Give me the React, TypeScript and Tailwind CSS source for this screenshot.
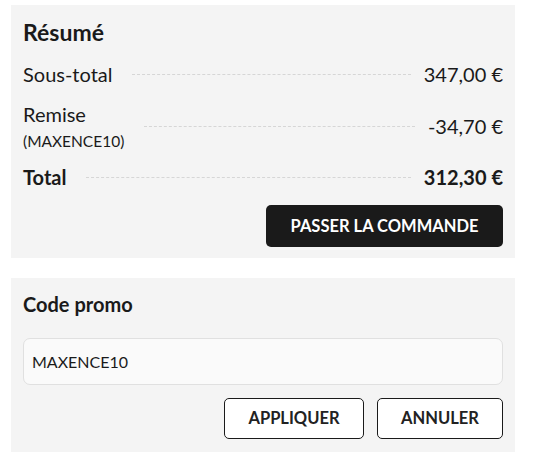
import React from "react";

const font = { fontFamily: "Lato, 'Noto Sans', sans-serif" };

function Row({ label, sub, value, bold }: { label: string; sub?: string; value: string; bold?: boolean }) {
  return (
    <div className="flex items-center">
      <div className="flex flex-col">
        <span className={`text-[20px] leading-[28px] ${bold ? "font-bold" : ""}`}>{label}</span>
        {sub && <span className="mt-[3px] text-[15.5px] leading-[21px]">{sub}</span>}
      </div>
      <div className="ml-5 mr-[13px] flex-1 border-t border-dashed border-[#d6d6d6]" />
      <span className={`text-[20px] leading-[28px] ${bold ? "font-bold" : ""}`}>{value}</span>
    </div>
  );
}

export default function App() {
  return (
    <div className="min-h-[473px] w-[534px] bg-white pl-[11px] pt-[5px] text-[#1a1a1a]" style={font}>
      <div className="w-[504px]">
        {/* résumé */}
        <div className="flex flex-col bg-[#f4f4f4] px-3 pb-[11px] pt-[12px]">
          <h2 className="text-[23px] font-bold leading-[30px]">Résumé</h2>
          <div className="mt-[13px]">
            <Row label="Sous-total" value="347,00 €" />
          </div>
          <div className="mt-[12px]">
            <Row label="Remise" sub="(MAXENCE10)" value="-34,70 €" />
          </div>
          <div className="mt-[11px]">
            <Row label="Total" value="312,30 €" bold />
          </div>
          <div className="mt-[14px] flex justify-end">
            <button className="h-[42px] w-[237px] rounded-[5px] bg-[#1a1a1a] text-[16.5px] font-bold text-white">
              PASSER LA COMMANDE
            </button>
          </div>
        </div>

        {/* code promo */}
        <div className="mt-[20px] flex flex-col bg-[#f4f4f4] px-3 pb-[13px] pt-[13px]">
          <h3 className="text-[20px] font-bold leading-[27px]">Code promo</h3>
          <div className="mt-[20px] flex h-[47px] items-center rounded-[7px] border border-[#e0e0e0] bg-[#fafafa] px-2 text-[16px]">
            MAXENCE10
          </div>
          <div className="mt-[13px] flex justify-end gap-[13px]">
            <button className="h-[41px] w-[140px] rounded-[5px] border border-[#1a1a1a] bg-white text-[16.5px] font-bold text-[#222]">
              APPLIQUER
            </button>
            <button className="h-[41px] w-[126px] rounded-[5px] border border-[#1a1a1a] bg-white text-[16.5px] font-bold text-[#222]">
              ANNULER
            </button>
          </div>
        </div>
      </div>
    </div>
  );
}
